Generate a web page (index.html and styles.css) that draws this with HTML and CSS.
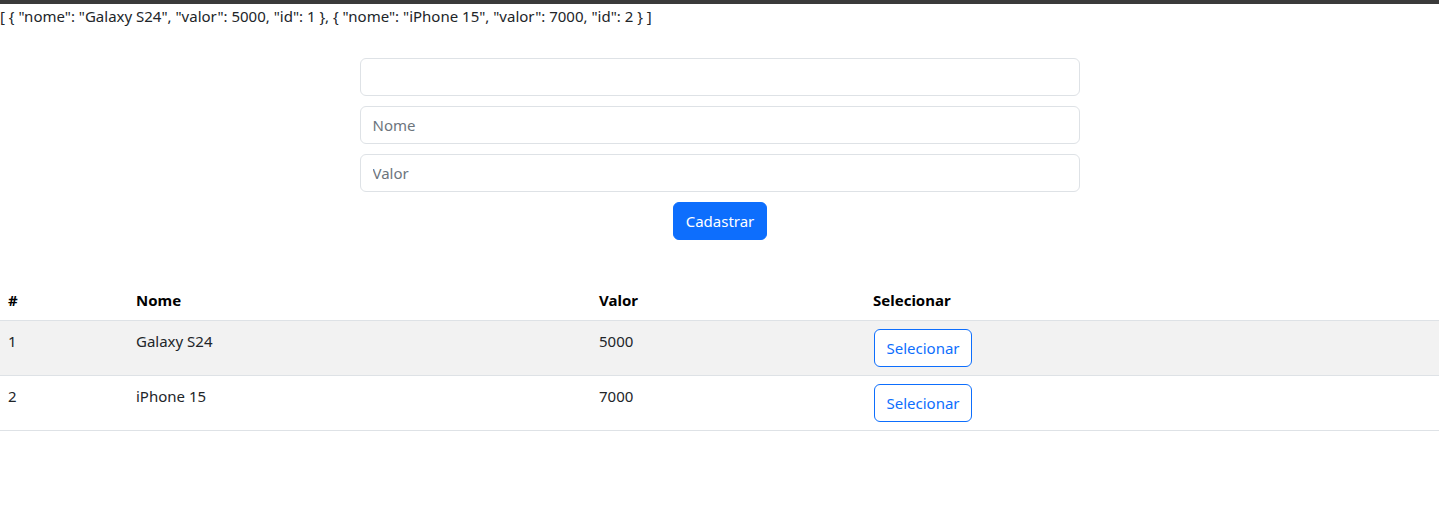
FILE: index.html
```html
<!DOCTYPE html>
<html lang="pt">
<head>
<meta charset="utf-8">
<title>Produtos</title>
<link rel="stylesheet" href="styles.css">
</head>
<body>
<div class="topbar"></div>
<div class="json">[ { "nome": "Galaxy S24", "valor": 5000, "id": 1 }, { "nome": "iPhone 15", "valor": 7000, "id": 2 } ]</div>
<form class="form">
  <input class="field" type="text">
  <input class="field" type="text" placeholder="Nome">
  <input class="field" type="text" placeholder="Valor">
  <div class="actions"><button type="button" class="btn-primary">Cadastrar</button></div>
</form>
<table class="table">
  <thead>
    <tr><th class="c1">#</th><th class="c2">Nome</th><th class="c3">Valor</th><th>Selecionar</th></tr>
  </thead>
  <tbody>
    <tr class="odd"><td>1</td><td>Galaxy S24</td><td>5000</td><td><button type="button" class="btn-outline">Selecionar</button></td></tr>
    <tr><td>2</td><td>iPhone 15</td><td>7000</td><td><button type="button" class="btn-outline">Selecionar</button></td></tr>
  </tbody>
</table>
</body>
</html>
```
FILE: styles.css
```css
* { box-sizing: border-box; }
body {
  margin: 0;
  font-family: "Noto Sans", "Open Sans", sans-serif;
  font-size: 15px;
  line-height: 24px;
  color: #212529;
  background: #fff;
}
.topbar { height: 4px; background: #3a3a3a; }
.json { height: 24px; white-space: nowrap; }
.form {
  width: 720px;
  margin: 30px auto 0;
  display: flex;
  flex-direction: column;
  gap: 10px;
}
.field {
  display: block;
  width: 100%;
  height: 38px;
  padding: 6px 12px;
  font: inherit;
  color: #212529;
  border: 1px solid #dee2e6;
  border-radius: 6px;
  background: #fff;
}
.field::placeholder { color: #6c757d; }
.actions { display: flex; justify-content: center; }
.btn-primary {
  width: 94px;
  height: 38px;
  padding: 6px 0;
  margin-left: 1px;
  font: inherit;
  text-align: center;
  color: #fff;
  background: #0d6efd;
  border: 1px solid #0d6efd;
  border-radius: 6px;
}
.table {
  width: 100%;
  margin-top: 40px;
  border-collapse: collapse;
}
.table th, .table td {
  text-align: left;
  vertical-align: top;
  padding: 8px;
  border-bottom: 1px solid #dee2e6;
}
.table th { font-weight: 700; color: #000; }
.table td { color: #212529; }
.c1 { width: 128px; }
.c2 { width: 463px; }
.c3 { width: 274px; }
.odd td { background: #f2f2f2; }
.btn-outline {
  width: 98px;
  height: 38px;
  padding: 6px 0;
  margin-left: 1px;
  font: inherit;
  text-align: center;
  color: #0d6efd;
  background: #fff;
  border: 1px solid #0d6efd;
  border-radius: 6px;
}
```
